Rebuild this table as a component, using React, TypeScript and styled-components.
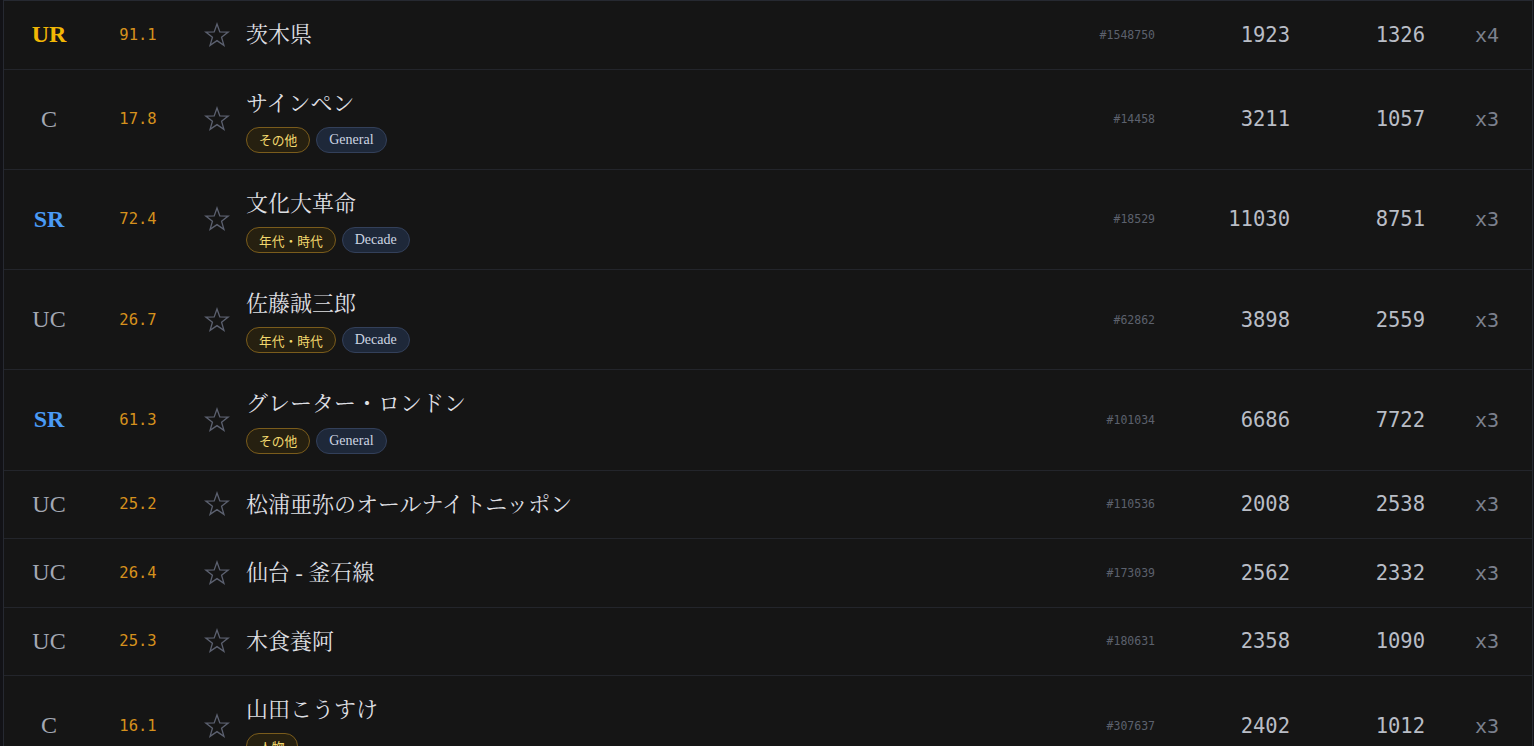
import React from "react";
import styled, { createGlobalStyle } from "styled-components";

const Global = createGlobalStyle`
  html, body { margin: 0; padding: 0; background: #121216; }
  body { font-family: "Liberation Serif", "Noto Sans CJK JP", serif; overflow: hidden; }
`;

type Rarity = "UR" | "SR" | "UC" | "C";
type TagKind = "cat" | "en";

interface Item {
  rarity: Rarity;
  score: string;
  title: string;
  tags: { label: string; kind: TagKind }[];
  id: string;
  a: string;
  b: string;
  mult: string;
}

const items: Item[] = [
  { rarity: "UR", score: "91.1", title: "茨木県", tags: [], id: "#1548750", a: "1923", b: "1326", mult: "x4" },
  { rarity: "C", score: "17.8", title: "サインペン", tags: [{ label: "その他", kind: "cat" }, { label: "General", kind: "en" }], id: "#14458", a: "3211", b: "1057", mult: "x3" },
  { rarity: "SR", score: "72.4", title: "文化大革命", tags: [{ label: "年代・時代", kind: "cat" }, { label: "Decade", kind: "en" }], id: "#18529", a: "11030", b: "8751", mult: "x3" },
  { rarity: "UC", score: "26.7", title: "佐藤誠三郎", tags: [{ label: "年代・時代", kind: "cat" }, { label: "Decade", kind: "en" }], id: "#62862", a: "3898", b: "2559", mult: "x3" },
  { rarity: "SR", score: "61.3", title: "グレーター・ロンドン", tags: [{ label: "その他", kind: "cat" }, { label: "General", kind: "en" }], id: "#101034", a: "6686", b: "7722", mult: "x3" },
  { rarity: "UC", score: "25.2", title: "松浦亜弥のオールナイトニッポン", tags: [], id: "#110536", a: "2008", b: "2538", mult: "x3" },
  { rarity: "UC", score: "26.4", title: "仙台 - 釜石線", tags: [], id: "#173039", a: "2562", b: "2332", mult: "x3" },
  { rarity: "UC", score: "25.3", title: "木食養阿", tags: [], id: "#180631", a: "2358", b: "1090", mult: "x3" },
  { rarity: "C", score: "16.1", title: "山田こうすけ", tags: [{ label: "人物", kind: "cat" }], id: "#307637", a: "2402", b: "1012", mult: "x3" },
];

const rarityColor: Record<Rarity, string> = {
  UR: "#f2b705",
  SR: "#4a9af5",
  UC: "#a3a8b3",
  C: "#a3a8b3",
};

const List = styled.div`
  margin: 0 1px 0 3px;
  border: 1px solid #262931;
  border-bottom: none;
  background: #151515;
`;

const Row = styled.div`
  display: grid;
  grid-template-columns: 90px 88px 64px 1fr 100px 135px 135px 74px;
  align-items: center;
  padding: 16px 33px 16px 0;
  border-bottom: 1px solid #23252b;
`;

const RarityCell = styled.div<{ $r: Rarity }>`
  text-align: center;
  font-family: "Liberation Serif", serif;
  font-size: 24px;
  font-weight: ${(p) => (p.$r === "UR" || p.$r === "SR" ? 700 : 400)};
  color: ${(p) => rarityColor[p.$r]};
`;

const ScoreCell = styled.div`
  text-align: center;
  font-family: "DejaVu Sans Mono", monospace;
  font-size: 15.5px;
  color: #d6911d;
`;

const StarCell = styled.div`
  display: flex;
  justify-content: center;
  padding-left: 6px;
`;

const TitleCell = styled.div`
  display: flex;
  flex-direction: column;
  gap: 5.75px;
  min-width: 0;
`;

const Title = styled.div`
  font-family: "Liberation Serif", "Noto Serif CJK JP", "Noto Sans CJK JP", serif;
  font-size: 22px;
  line-height: 35.5px;
  color: #dedfe2;
  white-space: nowrap;
`;

const Tags = styled.div`
  display: flex;
  gap: 6px;
`;

const Tag = styled.span<{ $kind: TagKind }>`
  display: inline-flex;
  align-items: center;
  height: 26px;
  box-sizing: border-box;
  padding: 0 12px;
  border-radius: 13px;
  font-family: "Liberation Serif", "Noto Sans CJK JP", serif;
  font-size: ${(p) => (p.$kind === "cat" ? "12.75px" : "14px")};
  border: 1px solid ${(p) => (p.$kind === "cat" ? "#7a5c1c" : "#33405a")};
  background: ${(p) => (p.$kind === "cat" ? "#262010" : "#1e2839")};
  color: ${(p) => (p.$kind === "cat" ? "#f2d86e" : "#cdd5e2")};
`;

const IdCell = styled.div`
  text-align: right;
  font-family: "DejaVu Sans Mono", monospace;
  font-size: 11.5px;
  color: #5c616d;
`;

const NumCell = styled.div`
  text-align: right;
  font-family: "DejaVu Sans Mono", monospace;
  font-size: 20.5px;
  color: #b9bdc6;
`;

const MultCell = styled.div`
  text-align: right;
  font-family: "DejaVu Sans Mono", monospace;
  font-size: 20px;
  color: #7b808d;
`;

const Star = () => (
  <svg width="26" height="26" viewBox="0 0 24 24" fill="none">
    <polygon
      points="12,1.8 14.6,9.1 22.3,9.3 16.2,14.1 18.4,21.6 12,17.2 5.6,21.6 7.8,14.1 1.7,9.3 9.4,9.1"
      stroke="#5c6170"
      strokeWidth="1.2"
      strokeLinejoin="miter"
    />
  </svg>
);

export default function App() {
  return (
    <>
      <Global />
      <List>
        {items.map((it, i) => (
          <Row key={i}>
            <RarityCell $r={it.rarity}>{it.rarity}</RarityCell>
            <ScoreCell>{it.score}</ScoreCell>
            <StarCell>
              <Star />
            </StarCell>
            <TitleCell>
              <Title>{it.title}</Title>
              {it.tags.length > 0 && (
                <Tags>
                  {it.tags.map((t, j) => (
                    <Tag key={j} $kind={t.kind}>
                      {t.label}
                    </Tag>
                  ))}
                </Tags>
              )}
            </TitleCell>
            <IdCell>{it.id}</IdCell>
            <NumCell>{it.a}</NumCell>
            <NumCell>{it.b}</NumCell>
            <MultCell>{it.mult}</MultCell>
          </Row>
        ))}
      </List>
    </>
  );
}
